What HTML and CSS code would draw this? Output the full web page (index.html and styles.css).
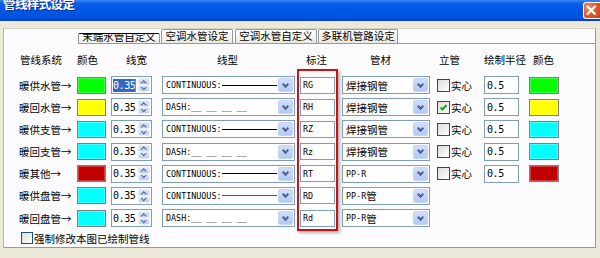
FILE: index.html
```html
<!DOCTYPE html>
<html>
<head>
<meta charset="utf-8">
<link rel="stylesheet" href="styles.css">
</head>
<body>
<div class="titlebar">
  <div class="title">管线样式设定</div>
  <div class="close"><svg width="17" height="17" viewBox="0 0 17 17"><path d="M4.5 4.5 L12 12 M12 4.5 L4.5 12" stroke="#fff" stroke-width="2.2" stroke-linecap="round"/></svg></div>
</div>
<div class="panel">
  <div class="tabstrip">
    <div class="tab t1 clip"><span>末端水管自定义</span></div>
    <div class="tab t2">空调水管设定</div>
    <div class="tab t3">空调水管自定义</div>
    <div class="tab t4">多联机管路设定</div>
  </div>
  <div class="table">
    <div class="row head">
      <span class="h h1">管线系统</span>
      <span class="h h2">颜色</span>
      <span class="h h3">线宽</span>
      <span class="h h4">线型</span>
      <span class="h h5">标注</span>
      <span class="h h6">管材</span>
      <span class="h h7">立管</span>
      <span class="h h8">绘制半径</span>
      <span class="h h9">颜色</span>
    </div>

    <div class="row">
      <span class="name">暖供水管→</span>
      <span class="sw green"></span>
      <span class="spin"><span class="val"><span class="sel">0.35</span><span class="caret"></span></span><span class="btns"><i class="up"></i><i class="dn"></i></span></span>
      <span class="combo lt"><span class="txt mono">CONTINUOUS:<span class="solid"></span></span><span class="dd"></span></span>
      <span class="edit mono">RG</span>
      <span class="combo mat"><span class="txt">焊接钢管</span><span class="dd"></span></span>
      <span class="chkwrap"><span class="chk"></span>实心</span>
      <span class="edit rad">0.5</span>
      <span class="sw green"></span>
    </div>

    <div class="row">
      <span class="name">暖回水管→</span>
      <span class="sw yellow"></span>
      <span class="spin"><span class="val">0.35</span><span class="btns"><i class="up"></i><i class="dn"></i></span></span>
      <span class="combo lt"><span class="txt mono">DASH:__ __ __ __</span><span class="dd"></span></span>
      <span class="edit mono">RH</span>
      <span class="combo mat"><span class="txt">焊接钢管</span><span class="dd"></span></span>
      <span class="chkwrap"><span class="chk on"><svg width="11" height="11" viewBox="0 0 11 11"><path d="M2.5 5.5 L4.5 7.5 L8.5 3" fill="none" stroke="#21A121" stroke-width="2"/></svg></span>实心</span>
      <span class="edit rad">0.5</span>
      <span class="sw yellow"></span>
    </div>

    <div class="row">
      <span class="name">暖供支管→</span>
      <span class="sw cyan"></span>
      <span class="spin"><span class="val">0.35</span><span class="btns"><i class="up"></i><i class="dn"></i></span></span>
      <span class="combo lt"><span class="txt mono">CONTINUOUS:<span class="solid"></span></span><span class="dd"></span></span>
      <span class="edit mono">RZ</span>
      <span class="combo mat"><span class="txt">焊接钢管</span><span class="dd"></span></span>
      <span class="chkwrap"><span class="chk"></span>实心</span>
      <span class="edit rad">0.5</span>
      <span class="sw cyan"></span>
    </div>

    <div class="row">
      <span class="name">暖回支管→</span>
      <span class="sw cyan"></span>
      <span class="spin"><span class="val">0.35</span><span class="btns"><i class="up"></i><i class="dn"></i></span></span>
      <span class="combo lt"><span class="txt mono">DASH:__ __ __ __</span><span class="dd"></span></span>
      <span class="edit mono">Rz</span>
      <span class="combo mat"><span class="txt">焊接钢管</span><span class="dd"></span></span>
      <span class="chkwrap"><span class="chk"></span>实心</span>
      <span class="edit rad">0.5</span>
      <span class="sw cyan"></span>
    </div>

    <div class="row">
      <span class="name">暖其他→</span>
      <span class="sw red"></span>
      <span class="spin"><span class="val">0.35</span><span class="btns"><i class="up"></i><i class="dn"></i></span></span>
      <span class="combo lt"><span class="txt mono">CONTINUOUS:<span class="solid"></span></span><span class="dd"></span></span>
      <span class="edit mono">RT</span>
      <span class="combo mat"><span class="txt"><span class="mono">PP-R</span></span><span class="dd"></span></span>
      <span class="chkwrap"><span class="chk"></span>实心</span>
      <span class="edit rad">0.5</span>
      <span class="sw red"></span>
    </div>

    <div class="row">
      <span class="name">暖供盘管→</span>
      <span class="sw cyan"></span>
      <span class="spin"><span class="val">0.35</span><span class="btns"><i class="up"></i><i class="dn"></i></span></span>
      <span class="combo lt"><span class="txt mono">CONTINUOUS:<span class="solid grey"></span></span><span class="dd"></span></span>
      <span class="edit mono">RD</span>
      <span class="combo mat"><span class="txt"><span class="mono">PP-R</span>管</span><span class="dd"></span></span>
    </div>

    <div class="row">
      <span class="name">暖回盘管→</span>
      <span class="sw cyan"></span>
      <span class="spin"><span class="val">0.35</span><span class="btns"><i class="up"></i><i class="dn"></i></span></span>
      <span class="combo lt"><span class="txt mono">DASH:__ __ __ __</span><span class="dd"></span></span>
      <span class="edit mono">Rd</span>
      <span class="combo mat"><span class="txt"><span class="mono">PP-R</span>管</span><span class="dd"></span></span>
    </div>
  </div>
  <div class="force"><span class="chk"></span>强制修改本图已绘制管线</div>
</div>
<div class="redbox"></div>
</body>
</html>
```

FILE: styles.css
```css
html, body {
  margin: 0;
  padding: 0;
}
body {
  width: 600px;
  height: 258px;
  overflow: hidden;
  background: #ECE9D8;
  font-family: "Noto Sans CJK SC", "Noto Sans", sans-serif;
  font-size: 10.5px;
  color: #000;
  position: relative;
}
.titlebar {
  height: 21px;
  background: linear-gradient(#3A86F4 0, #0E62EA 3px, #0056E6 45%, #0052DF 85%, #003CC2 100%);
  display: flex;
  justify-content: space-between;
  align-items: flex-start;
  overflow: hidden;
}
.title {
  color: #fff;
  font-weight: bold;
  font-size: 12.5px;
  line-height: 14px;
  margin-top: -3px;
  margin-left: 3px;
  letter-spacing: -0.6px;
  text-shadow: 1px 1px 0 #0A2A8A;
}
.close {
  width: 17px;
  height: 17px;
  margin-top: 2px;
  box-sizing: border-box;
  border: 1px solid #fff;
  border-right: none;
  border-radius: 3px 0 0 3px;
  background: radial-gradient(circle at 30% 30%, #F08A60 0, #E2592D 50%, #C8401A 100%);
  display: flex;
}
.close svg {
  margin-left: -1px;
  margin-top: -1px;
}
.panel {
  box-sizing: border-box;
  margin: 7px 0 0 3px;
  width: 593px;
  height: 220px;
  background: #FCFCFE;
  border-top: 1px solid #D4D2C8;
  border-left: 1px solid #B8B6AC;
  border-right: 1px solid #919B9C;
  border-bottom: 1px solid #919B9C;
}
.tabstrip {
  display: flex;
  align-items: flex-end;
  height: 14px;
  margin-left: 74px;
  border-bottom: 1px solid #919B9C;
}
.tab {
  box-sizing: border-box;
  height: 14px;
  border: 1px solid #919B9C;
  border-bottom: none;
  border-radius: 2px 2px 0 0;
  background: linear-gradient(#FFFFFF, #F3F3EF 60%, #E8E7E0);
  text-align: center;
  line-height: 12px;
  white-space: nowrap;
  margin-right: 1px;
}
.t1 { width: 82px; }
.t2 { width: 72px; margin-right: 2px; }
.t3 { width: 82px; }
.t4 { width: 80px; }
.tab.clip {
  height: 10px;
  overflow: hidden;
  border-top: 1px solid #000;
  display: flex;
  align-items: flex-end;
  justify-content: center;
}
.tab.clip span {
  line-height: 12px;
  flex: none;
  background: linear-gradient(#fff, #F1F1ED);
}
.table {
  margin-left: 15px;
  margin-top: 6px;
}
.row {
  display: grid;
  grid-template-columns: 58px 34px 51px 138px 42px 95px 47px 45px 30px;
  height: 22.17px;
  align-items: center;
}
.row.head {
  height: 24px;
  align-items: start;
  line-height: 20px;
}
.h1 { padding-left: 1px; }
.h2 { padding-left: 0; }
.h3 { padding-left: 15px; }
.h4 { padding-left: 55px; }
.h5 { padding-left: 6px; }
.h6 { padding-left: 28px; }
.h7 { padding-left: 2px; }
.h8 { padding-left: 0; }
.h9 { padding-left: 4px; }
.name {
  white-space: nowrap;
}
.sw {
  box-sizing: border-box;
  display: block;
  width: 29px;
  height: 17px;
  border: 1px solid #7E7E7E;
  box-shadow: inset 0 0 0 1px rgba(255,255,255,0.25);
}
.row .sw:last-child { width: 30px; }
.green { background: #00FF00; }
.yellow { background: #FFFF00; }
.cyan { background: #00FFFF; }
.red { background: #C00000; }
.mono {
  font-family: "DejaVu Sans Mono", monospace;
  font-size: 8.4px;
}
.spin {
  box-sizing: border-box;
  display: flex;
  width: 41px;
  height: 18px;
  border: 1px solid #7F9DB9;
  background: #fff;
}
.val {
  flex: 1;
  display: flex;
  align-items: center;
  padding-left: 1px;
  font-family: "DejaVu Sans Mono", monospace;
  font-size: 10px;
  letter-spacing: -0.4px;
}
.sel {
  background: #316AC5;
  color: #fff;
  line-height: 13px;
}
.caret {
  width: 1px;
  height: 13px;
  background: #C87A3A;
}
.btns {
  width: 12px;
  display: flex;
  flex-direction: column;
  gap: 0;
  padding: 1px 1px 1px 0;
}
.btns i {
  flex: 1;
  display: flex;
  align-items: center;
  justify-content: center;
  border-radius: 2px;
  background: linear-gradient(#D9E5FD, #BCCFF8);
  border: 1px solid #E8EEFC;
}
.btns i::before {
  content: "";
  width: 2.5px;
  height: 2.5px;
  border-left: 1.4px solid #4D6185;
  border-top: 1.4px solid #4D6185;
}
.btns .up::before { transform: translateY(1px) rotate(45deg); }
.btns .dn::before { transform: translateY(-1px) rotate(-135deg); }
.combo {
  box-sizing: border-box;
  display: flex;
  height: 18px;
  border: 1px solid #7F9DB9;
  background: #fff;
}
.combo.lt { width: 133px; }
.combo.mat { width: 88px; }
.txt {
  flex: 1;
  display: flex;
  align-items: center;
  padding-left: 3px;
  white-space: nowrap;
  overflow: hidden;
}
.txt .mono { font-size: 8.4px; }
.solid {
  display: inline-block;
  width: 55px;
  height: 1px;
  background: #000;
  margin-left: 1px;
}
.solid.grey { background: #555; }
.dd {
  width: 15px;
  margin: 1px;
  border-radius: 2px;
  background: linear-gradient(#D0DDFC, #B4C9F7);
  border: 1px solid #C4D3F6;
  box-sizing: border-box;
  display: flex;
  align-items: center;
  justify-content: center;
}
.dd::before {
  content: "";
  width: 3px;
  height: 3px;
  border-right: 2px solid #4D6185;
  border-bottom: 2px solid #4D6185;
  transform: translateY(-1px) rotate(45deg);
}
.edit {
  box-sizing: border-box;
  display: flex;
  align-items: center;
  width: 35px;
  height: 17px;
  border: 1px solid #7F9DB9;
  background: #fff;
  padding-left: 2px;
}
.edit.rad {
  font-family: "DejaVu Sans Mono", monospace;
  font-size: 10px;
  letter-spacing: -0.4px;
  height: 18px;
}
.chkwrap {
  display: flex;
  align-items: center;
  white-space: nowrap;
}
.chk {
  box-sizing: border-box;
  width: 13px;
  height: 13px;
  border: 1px solid #1C5180;
  background: linear-gradient(135deg, #DCDCD7, #FFFFFF);
  margin-right: 1px;
  display: flex;
  flex: none;
}
.force {
  display: flex;
  align-items: center;
  height: 18px;
  margin-left: 17px;
  margin-top: 0;
}
.force .chk {
  width: 12px;
  height: 12px;
  margin-right: 1px;
}
.redbox {
  position: absolute;
  left: 297px;
  top: 69px;
  width: 41px;
  height: 162px;
  box-sizing: border-box;
  border: 2px solid #CC1111;
  box-shadow: 2px 2px 3px rgba(0,0,0,0.3);
}
```
